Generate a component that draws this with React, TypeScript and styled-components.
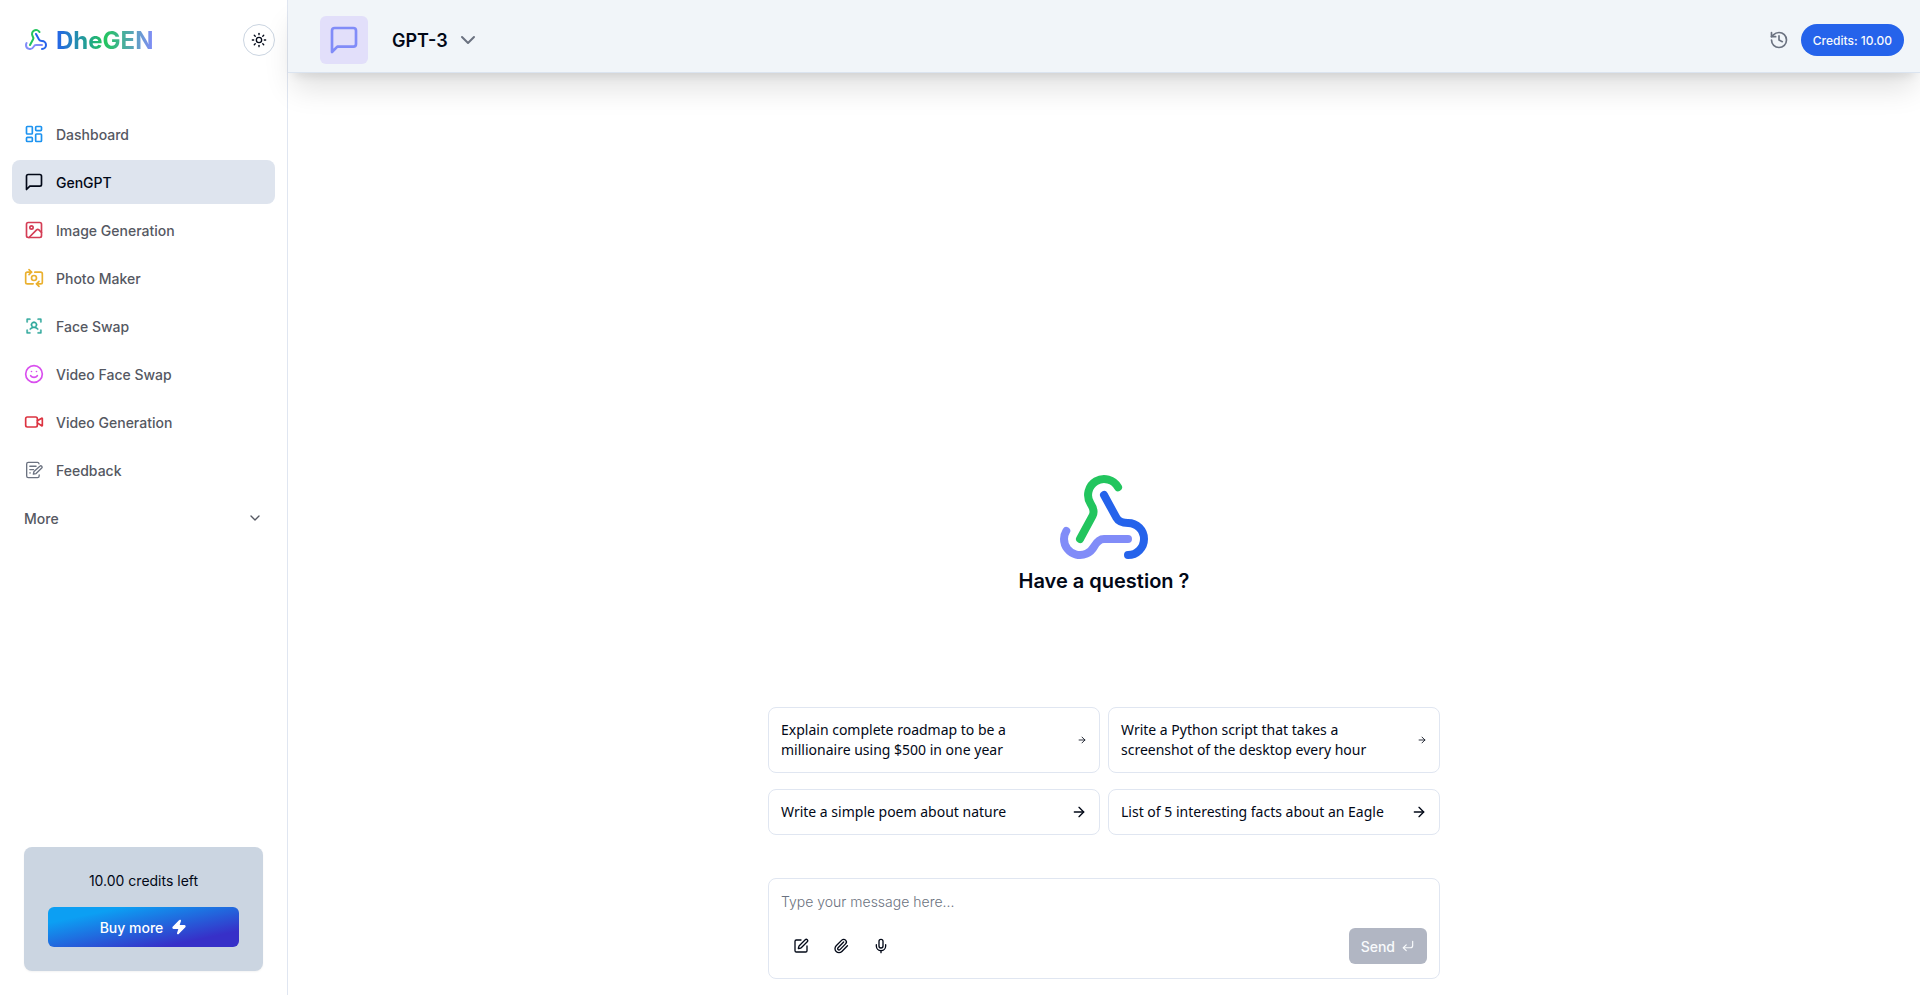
import React from "react";
import styled, { createGlobalStyle } from "styled-components";
import {
  ArrowRight, ChevronDown, CornerDownLeft, History, Image, LayoutDashboard,
  Mic, Paperclip, Smile, SquarePen, Sun, SwitchCamera, Video, Zap,
} from "lucide-react";
import { PiUserFocus } from "react-icons/pi";

const GlobalStyle = createGlobalStyle`
  *, *::before, *::after { box-sizing: border-box; }
  body {
    margin: 0;
    background: #fff;
    color: #020817;
    font-family: Inter, "Liberation Sans", sans-serif;
    font-size: 14px;
    line-height: 20px;
  }
  button, textarea { font: inherit; color: inherit; }
  button { cursor: pointer; border: 0; background: none; padding: 0; }
  svg { display: block; }
`;

const Layout = styled.div`
  display: grid;
  grid-template-columns: 288px minmax(0, 1fr);
  min-height: 100vh;
`;

const Sidebar = styled.aside`
  display: flex;
  flex-direction: column;
  border-right: 1px solid #e0e6f1;
  padding: 24px 12px;
`;

const SidebarTop = styled.div`
  display: flex;
  align-items: center;
  justify-content: space-between;
  padding-left: 12px;
  height: 32px;
`;

const Brand = styled.a`
  display: flex;
  align-items: center;
  gap: 8px;
  text-decoration: none;
`;

const BrandName = styled.span`
  font-size: 24px;
  line-height: 33px;
  font-weight: 700;
  color: transparent;
  background: linear-gradient(to right, #2563eb, #22c55e, #818cf8);
  background-clip: text;
  -webkit-background-clip: text;
`;

const ThemeButton = styled.button`
  display: grid;
  place-items: center;
  width: 32px;
  height: 32px;
  border: 1px solid #cbd5e1;
  border-radius: 50%;
`;

const Nav = styled.nav`
  display: flex;
  flex-direction: column;
  gap: 4px;
  margin-top: 56px;
`;

const NavLink = styled.a<{ $active?: boolean }>`
  display: flex;
  align-items: center;
  gap: 12px;
  height: 44px;
  padding: 0 12px;
  border-radius: 8px;
  font-weight: 500;
  line-height: 21px;
  text-decoration: none;
  color: ${(p) => (p.$active ? "#020817" : "#555862")};
  background: ${(p) => (p.$active ? "#dee4ee" : "transparent")};
`;

const IconTint = styled.span<{ $color: string }>`
  color: ${(p) => p.$color};
`;

const MoreButton = styled.button`
  display: flex;
  align-items: center;
  justify-content: space-between;
  height: 44px;
  padding: 0 12px;
  font-weight: 500;
  line-height: 21px;
  color: #555862;
`;

const CreditsCard = styled.section`
  display: flex;
  flex-direction: column;
  gap: 16px;
  margin: auto 12px 0;
  padding: 24px;
  border-radius: 8px;
  background: #cbd5e1;
  text-align: center;
  box-shadow: 0 1px 2px rgba(0, 0, 0, 0.05);
`;

const BuyButton = styled.button`
  display: flex;
  align-items: center;
  justify-content: center;
  gap: 8px;
  height: 40px;
  border-radius: 6px;
  font-weight: 500;
  line-height: 21px;
  color: #fff;
  background: linear-gradient(to bottom right, #0c9ff3 20%, #3730c8 80%);
`;

const Content = styled.div`
  display: flex;
  flex-direction: column;
  min-width: 0;
`;

const Header = styled.header`
  display: flex;
  align-items: center;
  justify-content: space-between;
  padding: 16px 16px 8px 32px;
  border-bottom: 1px solid #dbe4f0;
  background: #f1f5f9;
  box-shadow: 0 20px 30px -5px rgba(0, 0, 0, 0.12), 0 8px 10px -6px rgba(0, 0, 0, 0.1);
`;

const HeaderGroup = styled.div<{ $gap: number }>`
  display: flex;
  align-items: center;
  gap: ${(p) => p.$gap}px;
`;

const ToolTile = styled.div`
  display: grid;
  place-items: center;
  width: 48px;
  height: 48px;
  border-radius: 6px;
  color: #818cf8;
  background: #e2dffa;
`;

const ModelButton = styled.button`
  display: flex;
  align-items: center;
  gap: 8px;
  font-size: 18px;
  line-height: 29px;
  font-weight: 600;
`;

const IconButton = styled.button<{ $size: number }>`
  display: grid;
  place-items: center;
  width: ${(p) => p.$size}px;
  height: ${(p) => p.$size}px;
`;

const CreditsPill = styled.button`
  height: 32px;
  padding: 0 12px;
  border-radius: 16px;
  font-size: 12px;
  line-height: 17px;
  font-weight: 500;
  color: #f8fafc;
  background: #2563eb;
`;

const Muted = styled.span`
  color: #6b7280;
`;

const Chat = styled.main`
  display: flex;
  flex: 1;
  flex-direction: column;
  align-items: center;
  justify-content: flex-end;
  padding: 16px;
`;

const Intro = styled.div`
  display: flex;
  flex-direction: column;
  align-items: center;
`;

const Question = styled.h1`
  margin: 0;
  font-size: 20px;
  line-height: 28px;
  font-weight: 600;
`;

const Suggestions = styled.div`
  display: grid;
  grid-template-columns: 1fr 1fr;
  gap: 16px 8px;
  width: 100%;
  max-width: 672px;
  margin: 112px 0 43px;
`;

const Suggestion = styled.button`
  display: flex;
  align-items: center;
  justify-content: space-between;
  gap: 8px;
  padding: 12px;
  border: 1px solid #e0e6f1;
  border-radius: 8px;
  font-family: "Noto Sans", sans-serif;
  text-align: left;
`;

const Composer = styled.form`
  display: flex;
  flex-direction: column;
  width: 100%;
  max-width: 672px;
  padding: 12px;
  border: 1px solid #e0e6f1;
  border-radius: 8px;
`;

const MessageInput = styled.textarea`
  display: block;
  height: 35px;
  padding: 1px 0;
  border: 0;
  outline: 0;
  resize: none;
  background: transparent;
  font-weight: 300;
  &::placeholder { color: #6b7280; opacity: 1; }
`;

const ComposerBar = styled.div`
  display: flex;
  align-items: center;
  justify-content: space-between;
`;

const ComposerTools = styled.div`
  display: flex;
`;

const SendButton = styled.button`
  display: flex;
  align-items: center;
  gap: 6px;
  height: 36px;
  padding: 0 12px;
  border-radius: 6px;
  font-weight: 500;
  line-height: 21px;
  color: #f8fafc;
  background: #b1b6c3;
`;

const WebhookLogo = ({ size }: { size: number }) => (
  <svg width={size} height={size} viewBox="0 0 24 24" fill="none" strokeWidth="2" strokeLinecap="round" strokeLinejoin="round" aria-hidden="true">
    <path stroke="#818cf8" d="M18 16.98h-5.99c-1.1 0-1.95.94-2.48 1.9A4 4 0 0 1 2 17c.01-.7.2-1.4.57-2" />
    <path stroke="#22c55e" d="m6 17 3.13-5.78c.53-.97.1-2.18-.5-3.1a4 4 0 1 1 6.89-4.06" />
    <path stroke="#2563eb" d="m12 6 3.13 5.73C15.66 12.7 16.9 13 18 13a4 4 0 0 1 0 8" />
  </svg>
);

const MessageSquareIcon = ({ size }: { size: number }) => (
  <svg width={size} height={size} viewBox="0 0 24 24" fill="none" stroke="currentColor" strokeWidth="2" strokeLinecap="round" strokeLinejoin="round" aria-hidden="true">
    <path d="M21 15a2 2 0 0 1-2 2H7l-4 4V5a2 2 0 0 1 2-2h14a2 2 0 0 1 2 2z" />
  </svg>
);

const FeedbackIcon = () => (
  <svg width="20" height="20" viewBox="0 0 24 24" fill="none" stroke="currentColor" strokeWidth="1.6" strokeLinecap="round" strokeLinejoin="round" aria-hidden="true">
    <path d="M18 4.5a2 2 0 0 0-1.8-1.7H5.200a2 2 0 0 0-2 2v14.400a2 2 0 0 0 2 2h11a2 2 0 0 0 2-2V18" />
    <path d="M7 7.500h7.500M7 11.500h4.500M7 15.500h.5" />
    <path d="m11.200 17 .8-3.300 7-6.300a1.600 1.600 0 0 1 2.300 2.300l-6.800 6.600z" />
  </svg>
);

const navItems = [
  { label: "Dashboard", color: "#1d93f0", icon: <LayoutDashboard size={20} /> },
  { label: "GenGPT", color: "#020817", icon: <MessageSquareIcon size={20} />, active: true },
  { label: "Image Generation", color: "#d43d55", icon: <Image size={20} /> },
  { label: "Photo Maker", color: "#eab02e", icon: <SwitchCamera size={20} /> },
  { label: "Face Swap", color: "#2fa89c", icon: <PiUserFocus size={20} strokeWidth={4} /> },
  { label: "Video Face Swap", color: "#d94fee", icon: <Smile size={20} /> },
  { label: "Video Generation", color: "#dc3340", icon: <Video size={20} /> },
  { label: "Feedback", color: "#6b7280", icon: <FeedbackIcon /> },
];

const suggestions = [
  { lines: ["Explain complete roadmap to be a", "millionaire using $500 in one year"], arrow: 10 },
  { lines: ["Write a Python script that takes a", "screenshot of the desktop every hour"], arrow: 10 },
  { lines: ["Write a simple poem about nature"], arrow: 16 },
  { lines: ["List of 5 interesting facts about an Eagle"], arrow: 16 },
];

export default function App() {
  return (
    <>
      <GlobalStyle />
      <Layout>
        <Sidebar>
          <SidebarTop>
            <Brand href="#">
              <WebhookLogo size={24} />
              <BrandName>DheGEN</BrandName>
            </Brand>
            <ThemeButton type="button" aria-label="Toggle theme">
              <Sun size={16} />
            </ThemeButton>
          </SidebarTop>
          <Nav>
            {navItems.map((item) => (
              <NavLink key={item.label} href="#" $active={item.active}>
                <IconTint $color={item.color}>{item.icon}</IconTint>
                {item.label}
              </NavLink>
            ))}
            <MoreButton type="button">
              More
              <ChevronDown size={16} />
            </MoreButton>
          </Nav>
          <CreditsCard>
            <span>10.00 credits left</span>
            <BuyButton type="button">
              Buy more
              <Zap size={16} fill="currentColor" />
            </BuyButton>
          </CreditsCard>
        </Sidebar>
        <Content>
          <Header>
            <HeaderGroup $gap={24}>
              <ToolTile>
                <MessageSquareIcon size={32} />
              </ToolTile>
              <ModelButton type="button">
                GPT-3
                <Muted><ChevronDown size={24} /></Muted>
              </ModelButton>
            </HeaderGroup>
            <HeaderGroup $gap={12}>
              <IconButton type="button" $size={20} aria-label="History">
                <Muted><History size={20} /></Muted>
              </IconButton>
              <CreditsPill type="button">Credits: 10.00</CreditsPill>
            </HeaderGroup>
          </Header>
          <Chat>
            <Intro>
              <WebhookLogo size={96} />
              <Question>Have a question ?</Question>
            </Intro>
            <Suggestions>
              {suggestions.map((s) => (
                <Suggestion key={s.lines[0]} type="button">
                  <span>
                    {s.lines.map((line, i) => (
                      <React.Fragment key={line}>
                        {i > 0 && <br />}
                        {line}
                      </React.Fragment>
                    ))}
                  </span>
                  <ArrowRight size={s.arrow} />
                </Suggestion>
              ))}
            </Suggestions>
            <Composer>
              <MessageInput aria-label="Message" placeholder="Type your message here..." />
              <ComposerBar>
                <ComposerTools>
                  <IconButton type="button" $size={40} aria-label="New chat"><SquarePen size={16} /></IconButton>
                  <IconButton type="button" $size={40} aria-label="Attach file"><Paperclip size={16} /></IconButton>
                  <IconButton type="button" $size={40} aria-label="Use microphone"><Mic size={16} /></IconButton>
                </ComposerTools>
                <SendButton type="submit">
                  Send
                  <CornerDownLeft size={14} />
                </SendButton>
              </ComposerBar>
            </Composer>
          </Chat>
        </Content>
      </Layout>
    </>
  );
}
